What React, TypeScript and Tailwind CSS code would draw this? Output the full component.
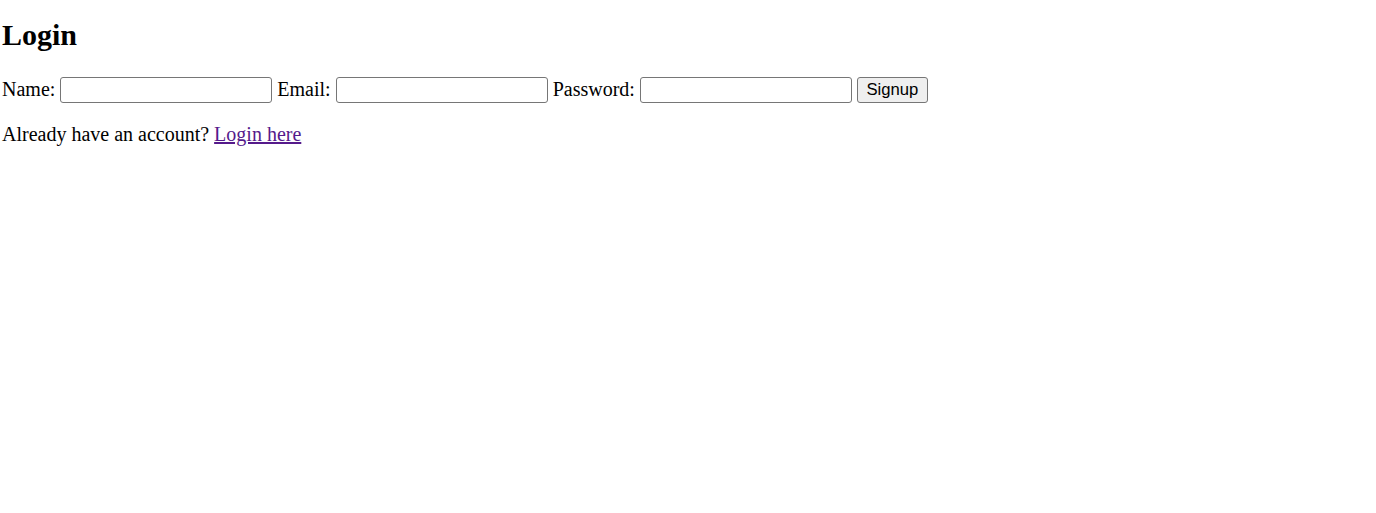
import React from 'react';

export default function App() {
  return (
    <div className="min-h-screen bg-white px-[2px] text-[20px] text-black font-['Liberation_Serif',_'Times_New_Roman',_serif]">
      <h2 className="mt-[17px] mb-[23px] text-[30px] leading-[35px] font-bold">Login</h2>
      <form className="leading-[28px]" onSubmit={(e) => e.preventDefault()}>
        Name:{' '}
        <input
          type="text"
          className="w-[212px] h-[26px] border border-[#767676] rounded-[3px] px-[3px] align-bottom text-[16.67px] font-['Liberation_Sans',_Arial,_sans-serif]"
        />{' '}
        Email:{' '}
        <input
          type="email"
          className="w-[212px] h-[26px] border border-[#767676] rounded-[3px] px-[3px] align-bottom text-[16.67px] font-['Liberation_Sans',_Arial,_sans-serif]"
        />{' '}
        Password:{' '}
        <input
          type="password"
          className="w-[212px] h-[26px] border border-[#767676] rounded-[3px] px-[3px] align-bottom text-[16.67px] font-['Liberation_Sans',_Arial,_sans-serif]"
        />{' '}
        <button
          type="submit"
          className="w-[71px] h-[26px] bg-[#efefef] border border-[#767676] rounded-[3px] align-bottom text-[16.67px] leading-[24px] font-['Liberation_Sans',_Arial,_sans-serif]"
        >
          Signup
        </button>
      </form>
      <p className="mt-[20px] leading-[23px]">
        Already have an account?{' '}
        <a href="#" className="text-[#551a8b] underline">
          Login here
        </a>
      </p>
    </div>
  );
}
